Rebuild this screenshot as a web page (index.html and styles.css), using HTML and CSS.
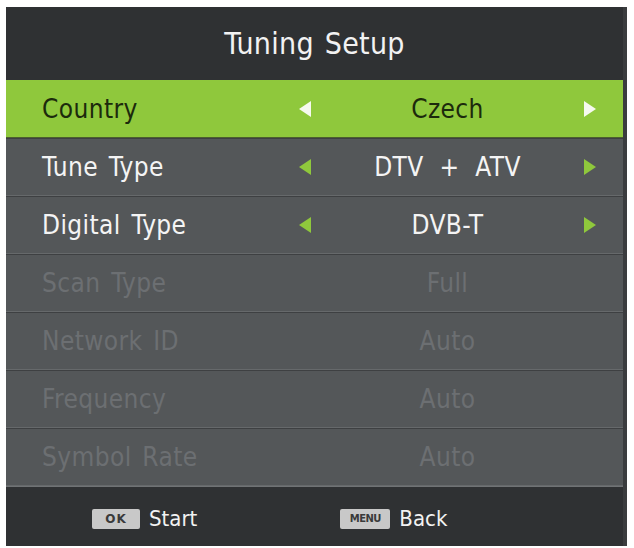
FILE: index.html
```html
<!DOCTYPE html>
<html lang="en">
<head>
    <meta charset="UTF-8">
    <title>Tuning Setup</title>
    <link rel="stylesheet" href="styles.css">
</head>
<body>
    <div class="panel">
        <header class="title">Tuning Setup</header>
        <div class="rows">
            <div class="row selected">
                <span class="label">Country</span>
                <span class="arrow left"></span>
                <span class="value">Czech</span>
                <span class="arrow right"></span>
            </div>
            <div class="row">
                <span class="label">Tune Type</span>
                <span class="arrow left"></span>
                <span class="value">DTV + ATV</span>
                <span class="arrow right"></span>
            </div>
            <div class="row">
                <span class="label">Digital Type</span>
                <span class="arrow left"></span>
                <span class="value">DVB-T</span>
                <span class="arrow right"></span>
            </div>
            <div class="row disabled">
                <span class="label">Scan Type</span>
                <span></span>
                <span class="value">Full</span>
                <span></span>
            </div>
            <div class="row disabled">
                <span class="label">Network ID</span>
                <span></span>
                <span class="value">Auto</span>
                <span></span>
            </div>
            <div class="row disabled">
                <span class="label">Frequency</span>
                <span></span>
                <span class="value">Auto</span>
                <span></span>
            </div>
            <div class="row disabled">
                <span class="label">Symbol Rate</span>
                <span></span>
                <span class="value">Auto</span>
                <span></span>
            </div>
        </div>
        <footer class="hints">
            <div class="hint"><span class="key">OK</span> Start</div>
            <div class="hint"><span class="key menu">MENU</span> Back</div>
        </footer>
    </div>
</body>
</html>
```

FILE: styles.css
```css
body {
    margin: 0;
    background: #ffffff;
    font-family: 'DejaVu Sans Condensed', 'DejaVu Sans', sans-serif;
}

.panel {
    margin: 7px 7px 0 6px;
    height: 539px;
    background: #2f3133;
    display: flex;
    flex-direction: column;
    border-right: 4px solid #3a3c3e;
}

.title {
    height: 73px;
    display: flex;
    align-items: center;
    justify-content: center;
    color: #f2f2f2;
    font-size: 30px;
    letter-spacing: 0.3px;
    word-spacing: 2px;
}

.rows {
    background: #545759;
}

.row {
    height: 56px;
    display: grid;
    grid-template-columns: 1fr 36px 249px 36px;
    align-items: center;
    padding: 0 15px 0 36px;
    font-size: 26px;
    letter-spacing: 0.4px;
    word-spacing: 3px;
    color: #f4f4f4;
    border-top: 1px solid #3e4042;
    border-bottom: 1px solid #66696b;
}

.row.selected {
    background: #8fc83c;
    color: #1c2a0c;
    border-top: none;
    border-bottom: 1px solid #4c5f2e;
    height: 57px;
}

.row.disabled {
    color: #6c6f72;
}

.value {
    text-align: center;
    word-spacing: 8px;
}

.arrow {
    justify-self: center;
    width: 0;
    height: 0;
    border-top: 8px solid transparent;
    border-bottom: 8px solid transparent;
}

.arrow.left {
    border-right: 12px solid #8fc83c;
}

.arrow.right {
    border-left: 12px solid #8fc83c;
}

.row.selected .arrow.left {
    border-right-color: #f6f9ef;
}

.row.selected .arrow.right {
    border-left-color: #f6f9ef;
}

.hints {
    flex: 1;
    display: flex;
    align-items: center;
    padding: 4px 0 0 86px;
    gap: 143px;
    border-top: 1px solid #707375;
}

.hint {
    display: flex;
    align-items: center;
    gap: 9px;
    color: #f2f2f2;
    font-size: 22px;
}

.key {
    width: 48px;
    height: 20px;
    background: #c8c8c8;
    border-radius: 2px;
    color: #3a3a3a;
    font-family: 'DejaVu Sans', sans-serif;
    font-weight: bold;
    font-size: 12px;
    display: flex;
    align-items: center;
    justify-content: center;
    letter-spacing: 1px;
}

.key.menu {
    width: 50px;
    font-size: 10px;
    letter-spacing: -0.5px;
}
```
